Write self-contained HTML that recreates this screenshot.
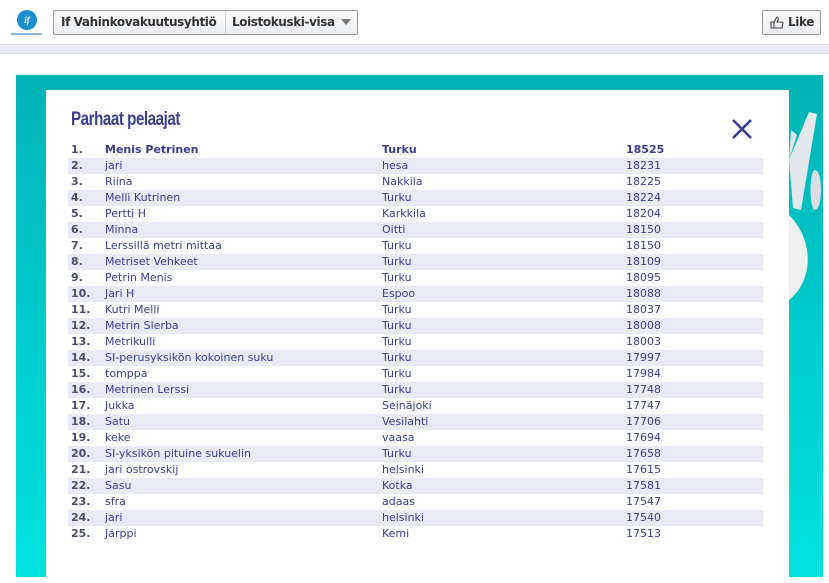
<!DOCTYPE html>
<html><head><meta charset="utf-8"><style>
*{margin:0;padding:0;box-sizing:border-box}
body{width:829px;height:583px;background:#fff;position:relative;overflow:hidden;font-family:"DejaVu Sans","Liberation Sans",sans-serif}
.hdr{position:absolute;left:0;top:0;width:829px;height:45px;background:#fff;border-bottom:1px solid #d3d6de}
.band{position:absolute;left:0;top:46px;width:829px;height:8px;background:#e9ebf2;border-bottom:1px solid #dfe2e9}
.logo{position:absolute;left:17px;top:10px;width:20px;height:20px;border-radius:50%;background:#1d8fd0;color:#fff;font:italic bold 9px "Liberation Serif",serif;text-align:center;line-height:20px}
.logot{position:absolute;left:11px;top:33px;width:31px;height:2px;background:#8ab6dc}
.btn{position:absolute;top:10px;height:25px;border:1px solid #999;border-radius:2px;background:linear-gradient(#fbfbfb,#eceef2);font:bold 12px "DejaVu Sans",sans-serif;color:#333;line-height:23px;letter-spacing:-0.4px}
.b1{left:53px;width:305px}
.b1 .s{position:absolute;left:171px;top:0;width:1px;height:23px;background:#d0d0d0}
.like{left:762px;width:59px;padding-left:25px}
.panel{position:absolute;left:16px;top:75px;width:807px;height:502px;background:linear-gradient(#00b3b5,#00e2e2)}
.box{position:absolute;left:46px;top:90px;width:743px;height:487px;background:#fff}
.title{position:absolute;left:71px;top:109px;font:bold 19px "Liberation Sans Narrow","Liberation Sans",sans-serif;color:#3b3f8c;letter-spacing:-0.6px;transform:scaleX(0.8);transform-origin:left}
.row{position:absolute;left:68px;width:695px;height:16px;font-size:11px;line-height:16px;color:#3b3d8e}
.row.alt{background:#e9eaf3}
.row span{position:absolute;top:0}
.n{left:3px;font-weight:bold;color:#4b4d6e}
.a{left:37px}.c{left:314px}.p{left:558px}
.row.first{font-weight:bold}
</style></head><body>
<div class="hdr"></div>
<div class="band"></div>
<div class="logo">if</div><div class="logot"></div>
<div class="btn b1"><span style="position:absolute;left:7px">If Vahinkovakuutusyhtiö</span><div class="s"></div><span style="position:absolute;left:178px">Loistokuski-visa</span><span style="position:absolute;left:287px;top:8px;width:0;height:0;border-left:5px solid transparent;border-right:5px solid transparent;border-top:6px solid #777"></span></div>
<div class="btn like"><svg style="position:absolute;left:7px;top:5px" width="14" height="13" viewBox="0 0 14 13"><path d="M1 6h3v6H1zM4 6l3-5c1 0 2 1 1 3l-1 2h5c1 0 1 1 1 1l-1 5H4" fill="none" stroke="#444" stroke-width="1.1"/></svg>Like</div>
<div class="panel"></div>
<svg style="position:absolute;left:789px;top:100px" width="34" height="200" viewBox="0 0 34 200"><path d="M0 60 L20 12 L28 14 L12 110 L4 108Z" fill="#e4e8ec"/><path d="M0 60 L2 30 L8 35Z" fill="#dfe4e8"/><path d="M26 70 C34 70 34 110 26 110 C20 110 20 70 26 70Z" fill="#d8dee2"/><path d="M0 115 C25 140 25 180 0 200Z" fill="#eef0f2"/></svg>
<div class="box"></div>
<div class="title">Parhaat pelaajat</div>
<svg style="position:absolute;left:731px;top:118px" width="22" height="22" viewBox="0 0 22 22"><path d="M2 2L20 20M20 2L2 20" stroke="#3b3f8c" stroke-width="2.6"/></svg>
<div class="row first" style="top:142px"><span class="n">1.</span><span class="a">Menis Petrinen</span><span class="c">Turku</span><span class="p">18525</span></div>
<div class="row alt" style="top:158px"><span class="n">2.</span><span class="a">jari</span><span class="c">hesa</span><span class="p">18231</span></div>
<div class="row" style="top:174px"><span class="n">3.</span><span class="a">Riina</span><span class="c">Nakkila</span><span class="p">18225</span></div>
<div class="row alt" style="top:190px"><span class="n">4.</span><span class="a">Melli Kutrinen</span><span class="c">Turku</span><span class="p">18224</span></div>
<div class="row" style="top:206px"><span class="n">5.</span><span class="a">Pertti H</span><span class="c">Karkkila</span><span class="p">18204</span></div>
<div class="row alt" style="top:222px"><span class="n">6.</span><span class="a">Minna</span><span class="c">Oitti</span><span class="p">18150</span></div>
<div class="row" style="top:238px"><span class="n">7.</span><span class="a">Lerssillä metri mittaa</span><span class="c">Turku</span><span class="p">18150</span></div>
<div class="row alt" style="top:254px"><span class="n">8.</span><span class="a">Metriset Vehkeet</span><span class="c">Turku</span><span class="p">18109</span></div>
<div class="row" style="top:270px"><span class="n">9.</span><span class="a">Petrin Menis</span><span class="c">Turku</span><span class="p">18095</span></div>
<div class="row alt" style="top:286px"><span class="n">10.</span><span class="a">Jari H</span><span class="c">Espoo</span><span class="p">18088</span></div>
<div class="row" style="top:302px"><span class="n">11.</span><span class="a">Kutri Melli</span><span class="c">Turku</span><span class="p">18037</span></div>
<div class="row alt" style="top:318px"><span class="n">12.</span><span class="a">Metrin Slerba</span><span class="c">Turku</span><span class="p">18008</span></div>
<div class="row" style="top:334px"><span class="n">13.</span><span class="a">Metrikulli</span><span class="c">Turku</span><span class="p">18003</span></div>
<div class="row alt" style="top:350px"><span class="n">14.</span><span class="a">SI-perusyksikön kokoinen suku</span><span class="c">Turku</span><span class="p">17997</span></div>
<div class="row" style="top:366px"><span class="n">15.</span><span class="a">tomppa</span><span class="c">Turku</span><span class="p">17984</span></div>
<div class="row alt" style="top:382px"><span class="n">16.</span><span class="a">Metrinen Lerssi</span><span class="c">Turku</span><span class="p">17748</span></div>
<div class="row" style="top:398px"><span class="n">17.</span><span class="a">Jukka</span><span class="c">Seinäjoki</span><span class="p">17747</span></div>
<div class="row alt" style="top:414px"><span class="n">18.</span><span class="a">Satu</span><span class="c">Vesilahti</span><span class="p">17706</span></div>
<div class="row" style="top:430px"><span class="n">19.</span><span class="a">keke</span><span class="c">vaasa</span><span class="p">17694</span></div>
<div class="row alt" style="top:446px"><span class="n">20.</span><span class="a">SI-yksikön pituine sukuelin</span><span class="c">Turku</span><span class="p">17658</span></div>
<div class="row" style="top:462px"><span class="n">21.</span><span class="a">jari ostrovskij</span><span class="c">helsinki</span><span class="p">17615</span></div>
<div class="row alt" style="top:478px"><span class="n">22.</span><span class="a">Sasu</span><span class="c">Kotka</span><span class="p">17581</span></div>
<div class="row" style="top:494px"><span class="n">23.</span><span class="a">sfra</span><span class="c">adaas</span><span class="p">17547</span></div>
<div class="row alt" style="top:510px"><span class="n">24.</span><span class="a">jari</span><span class="c">helsinki</span><span class="p">17540</span></div>
<div class="row" style="top:526px"><span class="n">25.</span><span class="a">Jarppi</span><span class="c">Kemi</span><span class="p">17513</span></div>
</body></html>
